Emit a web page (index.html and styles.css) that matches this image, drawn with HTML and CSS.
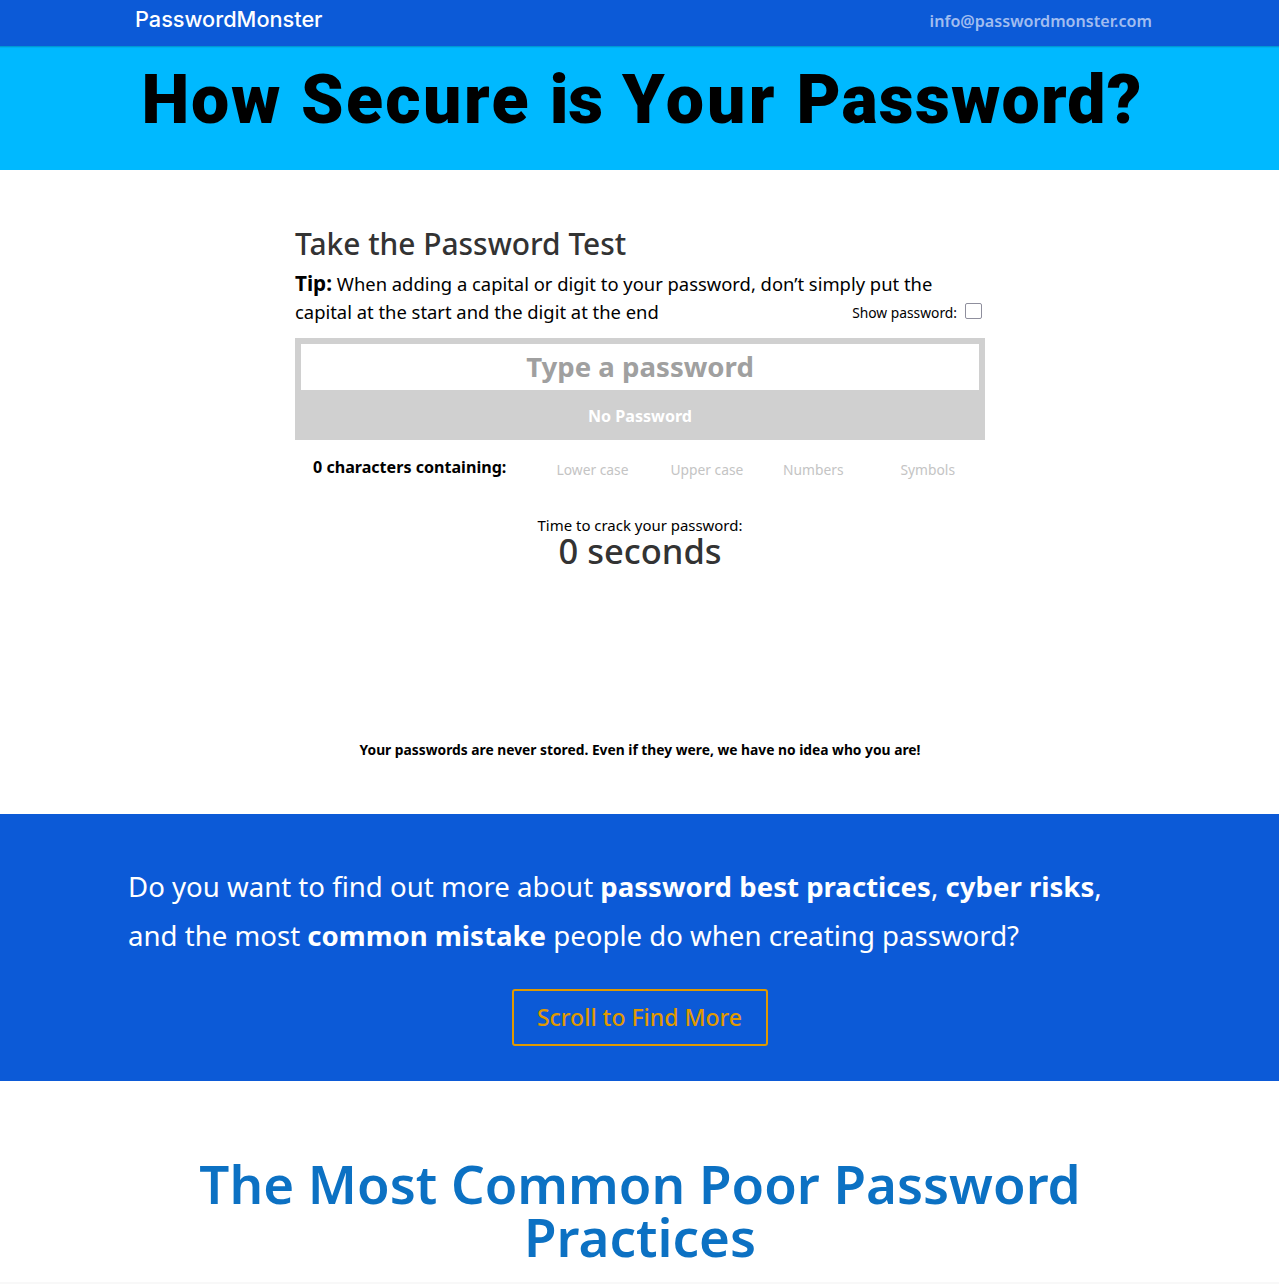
FILE: index.html
```html
<!DOCTYPE html>
<html lang="en">
<head>
<meta charset="utf-8">
<title>How Secure is Your Password?</title>
<link rel="stylesheet" href="styles.css">
</head>
<body>
<header class="topbar">
  <a class="logo">PasswordMonster</a>
  <a class="mail">info@passwordmonster.com</a>
</header>
<section class="hero"><h1>How <span class="w-secure">Secure</span> <span class="w-is">is</span> <span class="w-your">Your</span> <span class="w-password">Password?</span></h1></section>
<main class="tester">
  <h2><span>Take the Password Test</span></h2>
  <div class="tip-row">
    <p class="tip"><strong>Tip:</strong> When adding a capital or digit to your password, don’t simply put the<br>capital at the start and the digit at the end</p>
    <label class="show"><span>Show password:</span><input class="check" type="checkbox"></label>
  </div>
  <div class="field">
    <input class="password" type="text" placeholder="Type a password">
    <div class="strength"><span>No Password</span></div>
  </div>
  <div class="contains">
    <strong><span>0 characters containing:</span></strong>
    <span class="lower">Lower case</span>
    <span class="upper">Upper case</span>
    <span class="numbers">Numbers</span>
    <span class="symbols">Symbols</span>
  </div>
  <p class="crack"><span>Time to crack your password:</span></p>
  <p class="time"><span>0 seconds</span></p>
  <p class="privacy"><span>Your passwords are never stored. Even if they were, we have no idea who you are!</span></p>
</main>
<section class="more">
  <p>Do you want to find out more about <strong>password best practices</strong>, <strong>cyber risks</strong>,<br>and the most <strong>common mistake</strong> people do when creating password?</p>
  <a class="button"><span>Scroll to Find More</span></a>
</section>
<section class="practices">
  <h2>The Most Common Poor Password<br>Practices</h2>
</section>
</body>
</html>
```
FILE: styles.css
```css
* { box-sizing: border-box; margin: 0; }
body { height: 1284px; overflow: hidden; background: #fff; color: #000; font-family: "Noto Sans", sans-serif; display: flex; flex-direction: column; }
.topbar { height: 46px; flex: none; padding: 0 127px 0 135px; background: #0c5ad7; display: flex; justify-content: space-between; box-shadow: 0 1px 0 rgba(0,0,0,.12), 0 2px 0 rgba(0,0,0,.05); z-index: 1; }
.logo { color: #fff; font: 500 21.7px/39px Inter, sans-serif; white-space: nowrap; }
.mail { color: #a1bdf0; font-size: 16.1px; font-weight: 600; line-height: 43px; }
.hero { height: 124px; flex: none; padding-left: 5px; background: #00b9ff; text-align: center; }
h1 { font: 900 68px/108px Roboto, sans-serif; letter-spacing: 1.8px; white-space: nowrap; }
.w-secure { letter-spacing: 2.4px; }
.w-is { letter-spacing: 0; }
.w-your { letter-spacing: 3.2px; }
.w-password { letter-spacing: 1.2px; }
.tester { width: 690px; height: 644px; flex: none; margin: 0 auto; padding-top: 54px; position: relative; left: .5px; }
.tester h2 { color: #333; font-size: 29.9px; font-weight: 500; line-height: 40px; }
.tip-row { display: flex; justify-content: space-between; margin-top: 6px; height: 68px; white-space: nowrap; }
.tip { font-size: 18.4px; line-height: 28.4px; }
.tip strong { font-size: 20.7px; line-height: 20px; }
.show { display: flex; align-items: center; gap: 8px; font-size: 13.8px; height: 20px; margin: 32px 3px 0 -200px; }
.check { appearance: none; width: 17px; height: 16px; border: 1px solid #8f8f9d; border-radius: 2px; background: #fff; position: relative; top: -1px; margin: 0; }
.field { height: 102px; padding: 6px 6px 0; background: #d0d0d0; }
.password { display: block; width: 100%; height: 46px; border: 0; padding: 0 0 2px; text-align: center; font: 700 27.6px/44px "Noto Sans", sans-serif; }
.password::placeholder { color: #a0a0a0; opacity: 1; }
.strength { color: #fff; text-align: center; font-size: 16.1px; font-weight: 700; line-height: 52px; }
.contains { display: grid; grid-template-columns: 243.5px 114px 112.5px 117.5px auto; padding-left: 18px; height: 54px; line-height: 60px; font-size: 13.8px; color: #c4c4c4; white-space: nowrap; }
.contains strong { color: #000; font-size: 16.1px; line-height: 54px; }
.crack { margin-top: 21px; text-align: center; font-size: 14.95px; line-height: 20px; }
.time { text-align: center; color: #333; font-size: 34.5px; font-weight: 500; line-height: 32px; }
.privacy { margin-top: 173px; text-align: center; font-size: 13.8px; font-weight: 700; line-height: 20px; }
.more { height: 267px; flex: none; background: #0c5ad7; color: #fff; padding: 48px 128px 0; display: flex; flex-direction: column; align-items: center; }
.more p { align-self: stretch; height: 99px; font-size: 27.6px; line-height: 49px; white-space: nowrap; }
.button { width: 256px; height: 57px; margin-top: 28px; border: 2px solid #e09900; border-radius: 3px; color: #e09900; font-size: 23px; font-weight: 500; line-height: 53px; text-align: center; }
.practices { flex: 1; padding-top: 76px; padding-left: 1px; border-bottom: 2px solid #f8f8f8; text-align: center; }
.practices h2 { color: #0c71c3; font-size: 52.9px; font-weight: 600; line-height: 52.9px; white-space: nowrap; }
```
